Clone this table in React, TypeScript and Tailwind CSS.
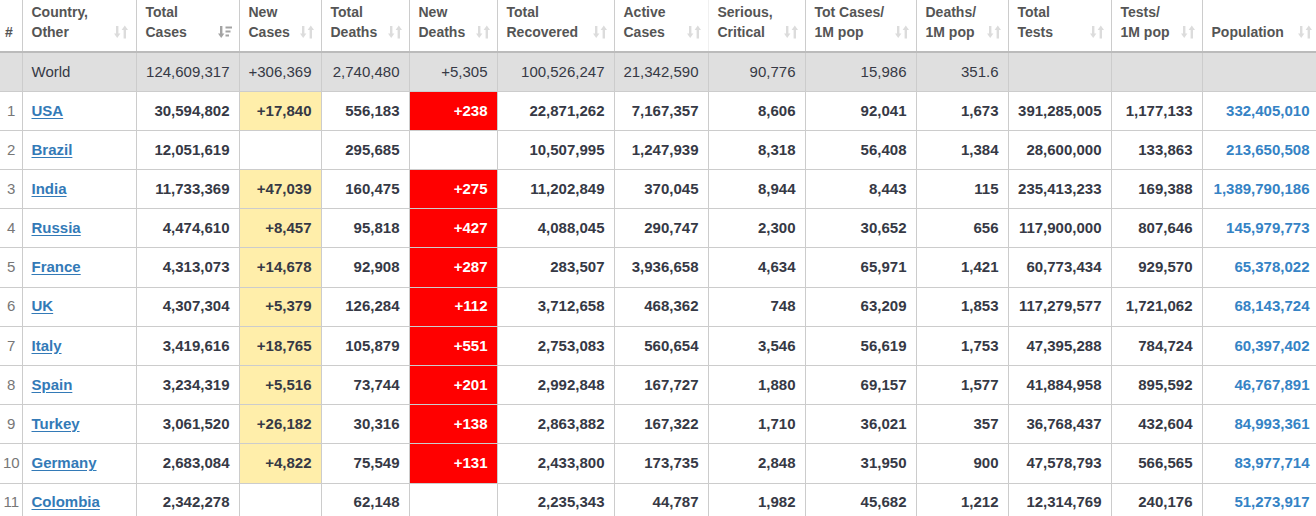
import React from "react"

type Row = {
  rank: number
  country: string
  cells: string[] // 12 values from Total Cases to Population
}

const world = [
  "124,609,317",
  "+306,369",
  "2,740,480",
  "+5,305",
  "100,526,247",
  "21,342,590",
  "90,776",
  "15,986",
  "351.6",
  "",
  "",
  "",
]

const rows: Row[] = [
  { rank: 1, country: "USA", cells: ["30,594,802", "+17,840", "556,183", "+238", "22,871,262", "7,167,357", "8,606", "92,041", "1,673", "391,285,005", "1,177,133", "332,405,010"] },
  { rank: 2, country: "Brazil", cells: ["12,051,619", "", "295,685", "", "10,507,995", "1,247,939", "8,318", "56,408", "1,384", "28,600,000", "133,863", "213,650,508"] },
  { rank: 3, country: "India", cells: ["11,733,369", "+47,039", "160,475", "+275", "11,202,849", "370,045", "8,944", "8,443", "115", "235,413,233", "169,388", "1,389,790,186"] },
  { rank: 4, country: "Russia", cells: ["4,474,610", "+8,457", "95,818", "+427", "4,088,045", "290,747", "2,300", "30,652", "656", "117,900,000", "807,646", "145,979,773"] },
  { rank: 5, country: "France", cells: ["4,313,073", "+14,678", "92,908", "+287", "283,507", "3,936,658", "4,634", "65,971", "1,421", "60,773,434", "929,570", "65,378,022"] },
  { rank: 6, country: "UK", cells: ["4,307,304", "+5,379", "126,284", "+112", "3,712,658", "468,362", "748", "63,209", "1,853", "117,279,577", "1,721,062", "68,143,724"] },
  { rank: 7, country: "Italy", cells: ["3,419,616", "+18,765", "105,879", "+551", "2,753,083", "560,654", "3,546", "56,619", "1,753", "47,395,288", "784,724", "60,397,402"] },
  { rank: 8, country: "Spain", cells: ["3,234,319", "+5,516", "73,744", "+201", "2,992,848", "167,727", "1,880", "69,157", "1,577", "41,884,958", "895,592", "46,767,891"] },
  { rank: 9, country: "Turkey", cells: ["3,061,520", "+26,182", "30,316", "+138", "2,863,882", "167,322", "1,710", "36,021", "357", "36,768,437", "432,604", "84,993,361"] },
  { rank: 10, country: "Germany", cells: ["2,683,084", "+4,822", "75,549", "+131", "2,433,800", "173,735", "2,848", "31,950", "900", "47,578,793", "566,565", "83,977,714"] },
  { rank: 11, country: "Colombia", cells: ["2,342,278", "", "62,148", "", "2,235,343", "44,787", "1,982", "45,682", "1,212", "12,314,769", "240,176", "51,273,917"] },
]

const headers: { lines: string[]; active?: boolean }[] = [
  { lines: ["Total", "Cases"], active: true },
  { lines: ["New", "Cases"] },
  { lines: ["Total", "Deaths"] },
  { lines: ["New", "Deaths"] },
  { lines: ["Total", "Recovered"] },
  { lines: ["Active", "Cases"] },
  { lines: ["Serious,", "Critical"] },
  { lines: ["Tot Cases/", "1M pop"] },
  { lines: ["Deaths/", "1M pop"] },
  { lines: ["Total", "Tests"] },
  { lines: ["Tests/", "1M pop"] },
  { lines: ["Population"] },
]

const widths = ["w-[103px]", "w-[82px]", "w-[88px]", "w-[88px]", "w-[117px]", "w-[94px]", "w-[97px]", "w-[111px]", "w-[92px]", "w-[103px]", "w-[91px]", "w-[117px]"]

function SortIcon({ active }: { active?: boolean }) {
  if (active) {
    return (
      <svg width="14" height="14" viewBox="0 0 14 14" className="shrink-0 fill-[#a3a3a3]">
        <rect x="2" y="1" width="2.4" height="8.5" />
        <polygon points="0,8.5 6.4,8.5 3.2,13" />
        <rect x="7.5" y="1.5" width="6.5" height="2" />
        <rect x="7.5" y="5.5" width="5" height="2" />
        <rect x="7.5" y="9.5" width="3.5" height="2" />
      </svg>
    )
  }
  return (
    <svg width="14" height="14" viewBox="0 0 14 14" className="shrink-0 fill-[#dcdcdc]">
      <rect x="2" y="1" width="2.4" height="8.5" />
      <polygon points="0,8.5 6.4,8.5 3.2,13" />
      <rect x="9.6" y="4.5" width="2.4" height="9" />
      <polygon points="7.6,5 14,5 10.8,0.5" />
    </svg>
  )
}

// base classes carry no alignment / colour so that each cell sets its own
const th = "align-bottom font-bold text-[14px] leading-[20px] text-[#555555] border-r border-[#cccccc] border-b-2 border-b-[#bbbbbb] pt-[1px] pb-[9px]"
const td = "h-[39.2px] text-[15px] border border-[#cccccc] whitespace-nowrap"
const num = `${td} text-right pl-[6px] pr-[9px]`

export default function App() {
  return (
    <div className="w-[1316px] h-[516px] overflow-hidden bg-white" style={{ fontFamily: '"Liberation Sans", Arial, sans-serif' }}>
      <table className="w-[1319px] table-fixed border-collapse">
        <colgroup>
          <col className="w-[22px]" />
          <col className="w-[114px]" />
          {widths.map((w, i) => (
            <col key={i} className={w} />
          ))}
        </colgroup>
        <thead>
          <tr className="h-[52px]">
            <th className={`${th} text-left border-l-0 pl-[5px] pr-0`}>#</th>
            <th className={`${th} text-left pl-[9px] pr-[8px]`}>
              <div className="flex items-end justify-between">
                <span>
                  Country,
                  <br />
                  Other
                </span>
                <span className="pb-[3px]">
                  <SortIcon />
                </span>
              </div>
            </th>
            {headers.map((h, i) => (
              <th key={i} className={`${th} text-left pl-[9px] pr-[7px] ${i === 5 ? "border-r-[#f0f0f0]" : ""}`}>
                <div className="flex items-end justify-between">
                  <span className="whitespace-nowrap">
                    {h.lines.map((l, j) => (
                      <span key={j} className="block">
                        {l}
                      </span>
                    ))}
                  </span>
                  <span className="pb-[3px]">
                    <SortIcon active={h.active} />
                  </span>
                </div>
              </th>
            ))}
          </tr>
        </thead>
        <tbody>
          <tr className="bg-[#dfdfdf] text-[#363945]">
            <td className={`${td} border-l-0 border-t-0`}></td>
            <td className={`${td} text-left pl-[9px]`}>World</td>
            {world.map((v, i) => (
              <td key={i} className={num}>
                {v}
              </td>
            ))}
          </tr>
          {rows.map((r) => (
            <tr key={r.rank} className="font-bold text-[#363945]">
              <td className={`${td} border-l-0 text-center align-middle font-normal text-[12px] text-[#777777] pl-[1px] pr-0`}>
                {r.rank}
              </td>
              <td className={`${td} text-left pl-[9px]`}>
                <a href="#" className="text-[#337ab7] underline underline-offset-2">
                  {r.country}
                </a>
              </td>
              {r.cells.map((v, i) => {
                let extra = ""
                if (i === 1 && v) extra = "bg-[#ffeeaa]"
                if (i === 3 && v) extra = "bg-[#ff0000] text-white"
                if (i === 11) extra = "text-[#3583c5]"
                return (
                  <td key={i} className={`${num} ${extra}`}>
                    {v}
                  </td>
                )
              })}
            </tr>
          ))}
        </tbody>
      </table>
    </div>
  )
}
